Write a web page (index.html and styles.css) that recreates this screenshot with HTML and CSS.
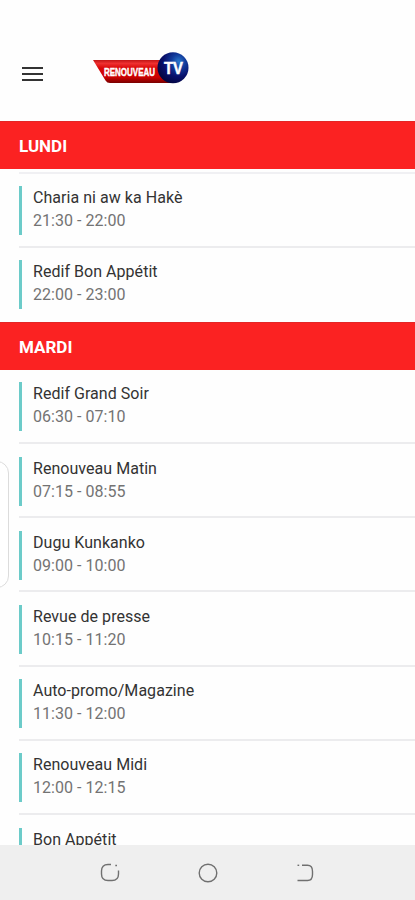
FILE: index.html
```html
<!DOCTYPE html>
<html lang="fr">
<head>
    <meta charset="UTF-8">
    <meta name="viewport" content="width=device-width, initial-scale=1.0">
    <title>Renouveau TV - Programmes</title>
    <link rel="stylesheet" href="styles.css">
</head>
<body>
    <div class="app">
        <header class="header">
            <button class="menu-button" aria-label="Menu">
                <span></span>
                <span></span>
                <span></span>
            </button>
            <svg class="logo" width="98" height="36" viewBox="0 0 98 36">
                <defs>
                    <linearGradient id="banner" x1="0" y1="0" x2="0" y2="1">
                        <stop offset="0" stop-color="#c11515"/>
                        <stop offset="0.15" stop-color="#ee3030"/>
                        <stop offset="0.35" stop-color="#d90808"/>
                        <stop offset="0.75" stop-color="#cc0000"/>
                        <stop offset="1" stop-color="#780000"/>
                    </linearGradient>
                    <radialGradient id="globe" cx="0.68" cy="0.3" r="0.75">
                        <stop offset="0" stop-color="#2a78cc"/>
                        <stop offset="0.3" stop-color="#123c9c"/>
                        <stop offset="0.65" stop-color="#08106c"/>
                        <stop offset="1" stop-color="#020640"/>
                    </radialGradient>
                </defs>
                <path d="M1 10H80V33H18Q15 33 13.5 30.5Z" fill="url(#banner)"/>
                <circle cx="81" cy="17.7" r="15.5" fill="url(#globe)"/>
                <text class="logo-name" x="12" y="25.7" textLength="51" lengthAdjust="spacingAndGlyphs">RENOUVEAU</text>
                <text class="logo-tv" x="72" y="23.8" textLength="19" lengthAdjust="spacingAndGlyphs">TV</text>
            </svg>
        </header>

        <main class="schedule">
            <section>
                <h2 class="day">LUNDI</h2>
                <ul class="programs first-day">
                    <li><div class="program"><p>Charia ni aw ka Hakè</p><time>21:30 - 22:00</time></div></li>
                    <li><div class="program"><p>Redif Bon Appétit</p><time>22:00 - 23:00</time></div></li>
                </ul>
            </section>
            <section>
                <h2 class="day">MARDI</h2>
                <ul class="programs">
                    <li><div class="program"><p>Redif Grand Soir</p><time>06:30 - 07:10</time></div></li>
                    <li><div class="program"><p>Renouveau Matin</p><time>07:15 - 08:55</time></div></li>
                    <li><div class="program"><p>Dugu Kunkanko</p><time>09:00 - 10:00</time></div></li>
                    <li><div class="program"><p>Revue de presse</p><time>10:15 - 11:20</time></div></li>
                    <li><div class="program"><p>Auto-promo/Magazine</p><time>11:30 - 12:00</time></div></li>
                    <li><div class="program"><p>Renouveau Midi</p><time>12:00 - 12:15</time></div></li>
                    <li><div class="program"><p>Bon Appétit</p></div></li>
                </ul>
            </section>
        </main>

        <nav class="navbar">
            <svg width="20" height="20" viewBox="0 0 20 20">
                <path d="M11 1.5H8Q1.5 1.5 1.5 8V11Q1.5 17.5 8 17.5H12Q18.5 17.5 18.5 11V7.5"/>
                <path d="M15.3 2.5H17"/>
            </svg>
            <svg width="20" height="20" viewBox="0 0 20 20">
                <circle cx="10" cy="10" r="8.8"/>
            </svg>
            <svg width="20" height="20" viewBox="0 0 20 20">
                <path d="M6 2.3H11.5Q16.5 2.3 16.5 8.3V11.5Q16.5 17.5 11.5 17.5H1.5"/>
                <path d="M1.5 2.3H3.2"/>
            </svg>
        </nav>

        <!-- edge panel handle -->
        <div class="side-handle"></div>
    </div>
</body>
</html>
```

FILE: styles.css
```css
* {
    box-sizing: border-box;
}
body {
    margin: 0;
    font-family: Roboto, sans-serif;
    background-color: #fefefe;
}
.app {
    position: relative;
    display: flex;
    flex-direction: column;
    height: 900px;
    overflow: hidden;
}
.header {
    display: flex;
    align-items: flex-start;
    flex: none;
    height: 121px;
    padding: 50px 22px 0;
}
.menu-button {
    display: flex;
    flex-direction: column;
    gap: 4px;
    width: 21px;
    margin: 17px 49px 0 0;
    padding: 0;
    border: none;
    background: none;
}
.menu-button span {
    height: 2px;
    background-color: #333;
}
.logo-name {
    font: bold 10.5px "Liberation Sans", sans-serif;
    fill: #fff;
    stroke: #fff;
    stroke-width: 0.4px;
}
.logo-tv {
    font: bold 17px "Liberation Sans", sans-serif;
    fill: #fff;
    stroke: #fff;
    stroke-width: 0.5px;
}
.schedule {
    flex: 1;
    min-height: 0;
    overflow: hidden;
}
.day {
    height: 47.5px;
    margin: 0;
    padding-left: 19px;
    border-top: 1px solid #e32626;
    background-color: #fb2222;
    color: #fff;
    font-size: 17px;
    font-weight: bold;
    line-height: 48px;
}
.programs {
    margin: 0;
    padding: 0 0 0 19px;
    list-style: none;
}
.programs li {
    height: 74.2px;
    padding-top: 12.5px;
    border-bottom: 2px solid #ececee;
}
.programs li:last-child {
    border-bottom-color: transparent;
}
.first-day {
    padding-top: 3px;
}
.first-day::before {
    content: "";
    display: block;
    height: 2px;
    background-color: #f0f0f3;
}
.first-day li:last-child {
    height: 74.7px;
}
.program {
    height: 49px;
    padding-left: 11px;
    border-left: 3px solid #6ccbc9;
    font-size: 16px;
    line-height: 23px;
    letter-spacing: 0.04px;
}
.program p {
    margin: 0;
    color: #333;
}
.program time {
    display: block;
    color: #737373;
}
.navbar {
    display: flex;
    flex: none;
    justify-content: space-between;
    align-items: center;
    height: 55px;
    padding: 0 99px 0 100px;
    background-color: #efefef;
}
.navbar svg {
    fill: none;
    stroke: #707070;
    stroke-width: 1.4;
}
.side-handle {
    position: absolute;
    top: 461px;
    left: -20px;
    width: 29px;
    height: 127px;
    border: 1px solid #dcdcdc;
    border-radius: 12px;
    background-color: #fff;
}
```
